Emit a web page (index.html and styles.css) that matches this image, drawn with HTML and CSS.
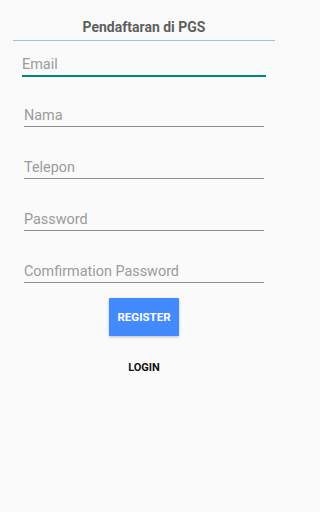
FILE: index.html
```html
<!DOCTYPE html>
<html lang="id">
<head>
<meta charset="utf-8">
<title>Pendaftaran di PGS</title>
<link rel="stylesheet" href="styles.css">
</head>
<body>
<div class="screen">
  <header class="header">
    <h1 class="title">Pendaftaran di PGS</h1>
    <div class="divider"></div>
  </header>
  <form class="form">
    <div class="field field-focused"><input class="input" type="email" placeholder="Email"></div>
    <div class="field"><input class="input" type="text" placeholder="Nama"></div>
    <div class="field"><input class="input" type="tel" placeholder="Telepon"></div>
    <div class="field"><input class="input" type="password" placeholder="Password"></div>
    <div class="field"><input class="input" type="password" placeholder="Comfirmation Password"></div>
    <div class="actions">
      <button type="button" class="btn-register">REGISTER</button>
      <button type="button" class="btn-login">LOGIN</button>
    </div>
  </form>
</div>
</body>
</html>
```
FILE: styles.css
```css
* { box-sizing: border-box; }
html, body {
  margin: 0;
  padding: 0;
  background: #fafafa;
  font-family: Roboto, "Liberation Sans", sans-serif;
}
.screen {
  width: 288px;
  height: 512px;
  display: flex;
  flex-direction: column;
}
.header {
  padding: 17px 13px 0 13px;
}
.title {
  margin: 0;
  font-size: 14px;
  line-height: 20px;
  font-weight: 700;
  color: #5f5f5f;
  text-align: center;
}
.divider {
  margin-top: 3px;
  height: 1px;
  background: #9cc3d9;
}
.form {
  display: flex;
  flex-direction: column;
  padding: 15px 24px 0 24px;
  margin: 0;
}
.field {
  margin-top: 31px;
  border-bottom: 1px solid #8c8c8c;
  height: 21px;
  display: flex;
  align-items: flex-end;
}
.field-focused {
  margin-top: 0;
  margin-left: -2px;
  margin-right: -2px;
  height: 21px;
  border-bottom: 2px solid #00897b;
}
.field-focused + .field { margin-top: 29px; }
.input {
  display: block;
  width: 100%;
  height: 18px;
  margin-bottom: 1px;
  border: 0;
  padding: 0;
  background: transparent;
  font-family: Roboto, "Liberation Sans", sans-serif;
  font-size: 14.4px;
  line-height: 18px;
  color: #333;
  outline: none;
}
.input::placeholder { color: #9b9b9b; opacity: 1; }
.actions {
  display: flex;
  flex-direction: column;
  align-items: center;
  padding-top: 15px;
}
.btn-register {
  width: 70px;
  height: 38px;
  border: 0;
  border-radius: 1px;
  background: #448aff;
  color: #ffffff;
  font-family: Roboto, "Liberation Sans", sans-serif;
  font-weight: 700;
  font-size: 11.5px;
  padding: 0;
  box-shadow: 0 1px 3px rgba(0,0,0,0.25);
}
.btn-login {
  margin-top: 25px;
  border: 0;
  background: transparent;
  color: #111;
  font-family: Roboto, "Liberation Sans", sans-serif;
  font-weight: 700;
  font-size: 11px;
  line-height: 14px;
  padding: 0;
}
```
